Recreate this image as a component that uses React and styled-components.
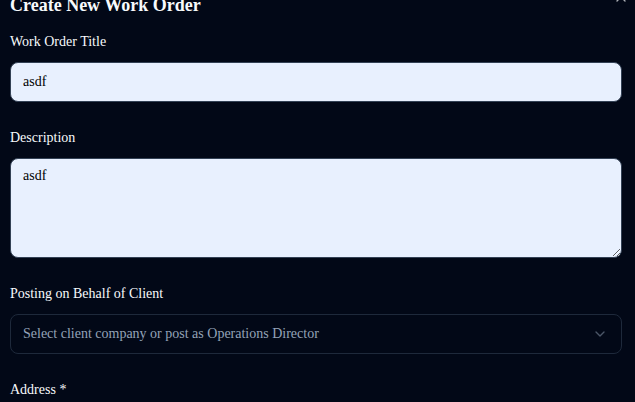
import React from "react";
import styled, { createGlobalStyle } from "styled-components";
import { X, ChevronDown } from "lucide-react";

const GlobalStyle = createGlobalStyle`
  html, body {
    margin: 0;
    background: #020817;
    font-family: "Liberation Serif", "Times New Roman", serif;
    overflow: hidden;
  }
`;

// contenido del dialogo, ya desplazado un poco hacia arriba
const Dialogo = styled.div`
  position: relative;
  margin-top: -9px;
  padding: 0 13px 0 10px;
  color: #f8fafc;
`;

const BotonCerrar = styled.button`
  position: absolute;
  top: -2px;
  right: 6px;
  width: 16px;
  height: 16px;
  padding: 0;
  border: none;
  background: transparent;
  color: #f8fafc;
  opacity: 0.7;
  display: flex;
`;

const Titulo = styled.h2`
  margin: 0;
  font-size: 18px;
  line-height: 28px;
  font-weight: bold;
`;

const Formulario = styled.form`
  display: flex;
  flex-direction: column;
  gap: 26px;
  margin-top: 13px;
`;

const Campo = styled.div`
  display: flex;
  flex-direction: column;
  gap: 10px;
`;

const Etiqueta = styled.label`
  font-size: 14px;
  line-height: 20px;
`;

const Entrada = styled.input`
  box-sizing: border-box;
  height: 40px;
  width: 100%;
  padding: 0 12px;
  border: 1px solid #334155;
  border-radius: 8px;
  background: #e8f0fe;
  color: #000;
  font-family: inherit;
  font-size: 14px;
  outline: none;
`;

const AreaTexto = styled.textarea`
  box-sizing: border-box;
  height: 100px;
  width: 100%;
  padding: 7px 12px;
  border: 1px solid #334155;
  border-radius: 8px;
  background: #e8f0fe;
  color: #000;
  font-family: inherit;
  font-size: 14px;
  line-height: 20px;
  outline: none;
`;

const Selector = styled.button`
  box-sizing: border-box;
  height: 40px;
  width: 100%;
  display: flex;
  align-items: center;
  justify-content: space-between;
  padding: 0 13px 0 12px;
  border: 1px solid #1e293b;
  border-radius: 8px;
  background: transparent;
  color: #94a3b8;
  font-family: inherit;
  font-size: 14px;
  text-align: left;

  svg {
    opacity: 0.5;
  }
`;

export default function App() {
  return (
    <>
      <GlobalStyle />
      <Dialogo>
        <BotonCerrar type="button">
          <X size={16} />
        </BotonCerrar>
        <Titulo>Create New Work Order</Titulo>
        <Formulario>
          <Campo>
            <Etiqueta>Work Order Title</Etiqueta>
            <Entrada defaultValue="asdf" />
          </Campo>
          <Campo>
            <Etiqueta>Description</Etiqueta>
            <AreaTexto defaultValue="asdf" />
          </Campo>
          <Campo>
            <Etiqueta>Posting on Behalf of Client</Etiqueta>
            <Selector type="button">
              <span>Select client company or post as Operations Director</span>
              <ChevronDown size={16} />
            </Selector>
          </Campo>
          <Campo>
            <Etiqueta>Address *</Etiqueta>
          </Campo>
        </Formulario>
      </Dialogo>
    </>
  );
}
